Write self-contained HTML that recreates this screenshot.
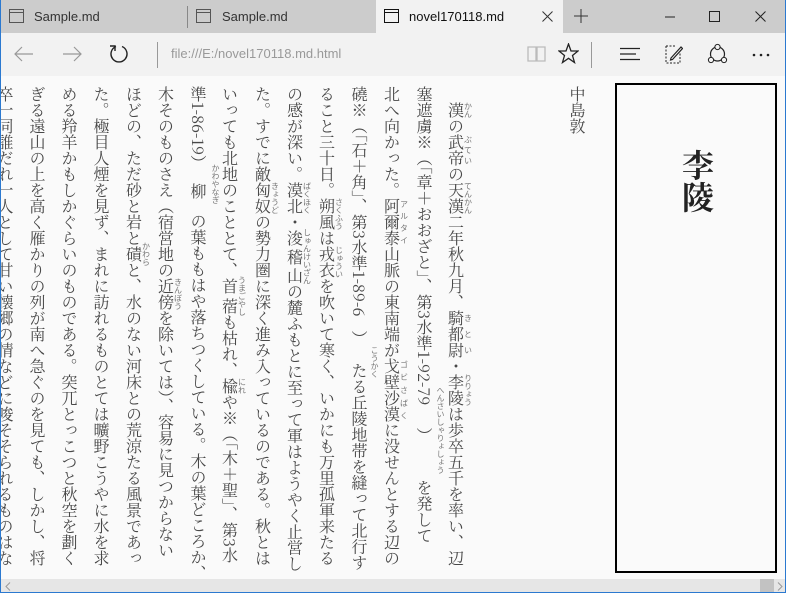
<!DOCTYPE html>
<html lang="ja"><head><meta charset="utf-8">
<style>
*{margin:0;padding:0;box-sizing:border-box}
html,body{width:786px;height:593px;overflow:hidden;background:#fafafa;font-family:"Liberation Sans",sans-serif}
#win{position:absolute;left:0;top:0;width:786px;height:593px;border-left:1px solid #2b79d0;border-right:1px solid #2b79d0;border-bottom:1px solid #2b79d0}
#tabs{position:absolute;left:0;top:0;width:786px;height:33px;background:#cccccc}
.tab{position:absolute;top:0;height:33px;font-size:13px;color:#333;line-height:33px}
#tool{position:absolute;left:0;top:33px;width:786px;height:43px;background:#f2f2f2}
.ab{position:absolute}
#content{position:absolute;left:0;top:76px;width:786px;height:503px;background:#fafafa;overflow:hidden}
.col{position:absolute;top:10px;width:32px;height:490px;writing-mode:vertical-rl;font-size:16px;line-height:32px;white-space:nowrap;color:#484848;font-family:"Noto Serif CJK SC","Noto Serif CJK JP",serif}
rt{font-size:8px;color:#777;font-family:"Noto Sans CJK JP",sans-serif}
.rb{position:absolute;writing-mode:vertical-rl;font-size:8px;color:#777;font-family:"Noto Sans CJK JP",sans-serif;white-space:nowrap;line-height:8px}
.sp{display:inline-block;width:1px}
#box{position:absolute;left:615px;top:7px;width:162px;height:490px;border:2px solid #000}
#ttl{position:absolute;left:65px;top:64px;writing-mode:vertical-rl;font-size:32px;font-weight:bold;line-height:32px;color:#222;font-family:"Noto Serif CJK SC",serif}
#sb{position:absolute;left:0;top:579px;width:786px;height:14px;background:#e6e6e6}
</style></head><body>
<div id="tabs">
 <svg class="ab" style="left:9px;top:9px" width="16" height="15"><rect x="0.5" y="0.5" width="14" height="13" fill="none" stroke="#555"/><line x1="0" y1="3.5" x2="15" y2="3.5" stroke="#555"/></svg>
 <div class="tab" style="left:34px">Sample.md</div>
 <div class="ab" style="left:187px;top:6px;width:1px;height:22px;background:#888"></div>
 <svg class="ab" style="left:196px;top:9px" width="16" height="15"><rect x="0.5" y="0.5" width="14" height="13" fill="none" stroke="#555"/><line x1="0" y1="3.5" x2="15" y2="3.5" stroke="#555"/></svg>
 <div class="tab" style="left:222px">Sample.md</div>
 <div class="ab" style="left:376px;top:0;width:187px;height:33px;background:#f2f2f2"></div>
 <svg class="ab" style="left:384px;top:9px" width="16" height="15"><rect x="0.5" y="0.5" width="14" height="13" fill="none" stroke="#111"/><line x1="0" y1="3.5" x2="15" y2="3.5" stroke="#111"/></svg>
 <div class="tab" style="left:409px;color:#111">novel170118.md</div>
 <svg class="ab" style="left:542px;top:11px" width="11" height="11"><path d="M0.5 0.5L10.5 10.5M10.5 0.5L0.5 10.5" stroke="#333"/></svg>
 <svg class="ab" style="left:574px;top:9px" width="14" height="14"><path d="M7 0V14M0 7H14" stroke="#333"/></svg>
 <svg class="ab" style="left:665px;top:16px" width="10" height="2"><path d="M0 1H10" stroke="#222"/></svg>
 <svg class="ab" style="left:709px;top:11px" width="11" height="11"><rect x="0.5" y="0.5" width="10" height="10" fill="none" stroke="#222"/></svg>
 <svg class="ab" style="left:755px;top:11px" width="11" height="11"><path d="M0.5 0.5L10.5 10.5M10.5 0.5L0.5 10.5" stroke="#222"/></svg>
</div>
<div id="tool">
 <svg class="ab" style="left:14px;top:13px" width="20" height="16"><path d="M19 8H1M8 1L1 8L8 15" fill="none" stroke="#999" stroke-width="1.2"/></svg>
 <svg class="ab" style="left:62px;top:13px" width="20" height="16"><path d="M1 8H19M12 1L19 8L12 15" fill="none" stroke="#999" stroke-width="1.2"/></svg>
 <svg class="ab" style="left:109px;top:11px" width="20" height="20"><path d="M7 2.5A8 8 0 1 0 13 2.5M6 7V2H1" fill="none" stroke="#222" stroke-width="1.4"/></svg>
 <div class="ab" style="left:157px;top:9px;width:1px;height:26px;background:#999"></div>
 <div class="ab" style="left:171px;top:13px;font-size:13px;color:#999">file:///E:/novel170118.md.html</div>
 <svg class="ab" style="left:527px;top:12px" width="20" height="18"><path d="M1 2H9V16H1ZM10 2H18V16H10Z" fill="none" stroke="#bbb" stroke-width="1.3"/></svg>
 <svg class="ab" style="left:558px;top:10px" width="21" height="21"><path d="M10.5 1L13 8H20L14.5 12.5L16.5 19.5L10.5 15.3L4.5 19.5L6.5 12.5L1 8H8Z" fill="none" stroke="#222" stroke-width="1.3"/></svg>
 <div class="ab" style="left:591px;top:9px;width:1px;height:26px;background:#999"></div>
 <svg class="ab" style="left:620px;top:14px" width="20" height="14"><path d="M0 1.5H20M0 7H16M0 12.5H20" stroke="#222" stroke-width="1.3"/></svg>
 <svg class="ab" style="left:664px;top:11px" width="19" height="21"><path d="M2 2H12M2 2V19H16V9" fill="none" stroke="#222" stroke-dasharray="2 1.5"/><path d="M7 14L17 3L18.5 4.5L8.5 15.5L6.5 16Z" fill="none" stroke="#222" stroke-width="1.2"/></svg>
 <svg class="ab" style="left:707px;top:10px" width="21" height="22"><circle cx="10.5" cy="11" r="7" fill="none" stroke="#222" stroke-width="1.2"/><circle cx="10.5" cy="4" r="2.6" fill="#f2f2f2" stroke="#222"/><circle cx="4" cy="17" r="2.6" fill="#f2f2f2" stroke="#222"/><circle cx="17" cy="17" r="2.6" fill="#f2f2f2" stroke="#222"/></svg>
 <svg class="ab" style="left:752px;top:20px" width="18" height="4"><circle cx="2" cy="2" r="1.3" fill="#222"/><circle cx="9" cy="2" r="1.3" fill="#222"/><circle cx="16" cy="2" r="1.3" fill="#222"/></svg>
</div>
<div id="content">
 <div class="col" style="left:561px;top:10px">中島敦</div>
 <div id="box"><div id="ttl">李陵</div></div>

 <div class="col" style="left:440px">　<ruby>漢<rt>かん</rt></ruby>の<ruby>武帝<rt>ぶてい</rt></ruby>の<ruby>天漢<rt>てんかん</rt></ruby>二年秋九月、<ruby>騎都尉<rt>きとい</rt></ruby>・<ruby>李陵<rt>りりょう</rt></ruby>は歩卒五千を率い、辺</div>
 <div class="col" style="left:408px">塞遮虜※（「章＋おおざと」、第3水準1-92-79<i class="sp" style="height:22px"></i>）<i class="sp" style="height:36px"></i>を発して</div>
 <div class="rb" style="left:436px;top:310px">へんさいしゃりょしょう</div>
 <div class="col" style="left:376px">北へ向かった。<ruby>阿爾泰<rt>アルタイ</rt></ruby>山脈の東南端が<ruby>戈壁沙漠<rt>ゴビさばく</rt></ruby>に没せんとする辺の</div>
 <div class="col" style="left:343px">磽※（「石＋角」、第3水準1-89-6<i class="sp" style="height:14px"></i>）<i class="sp" style="height:16px"></i>たる丘陵地帯を縫って北行す</div>
 <div class="rb" style="left:370px;top:270px">こうかく</div>
 <div class="col" style="left:311px">ること三十日。<ruby>朔風<rt>さくふう</rt></ruby>は<ruby>戎衣<rt>じゅうい</rt></ruby>を吹いて寒く、いかにも万里孤軍来たる</div>
 <div class="col" style="left:279px">の感が深い。<ruby>漠北<rt>ばくほく</rt></ruby>・<ruby>浚稽山<rt>しゅんけいざん</rt></ruby>の麓ふもとに至って軍はようやく止営し</div>
 <div class="col" style="left:247px">た。すでに敵<ruby>匈奴<rt>きょうど</rt></ruby>の勢力圏に深く進み入っているのである。秋とは</div>
 <div class="col" style="left:214px">いっても北地のこととて、<ruby>首蓿<rt>うまごやし</rt></ruby>も枯れ、<ruby>楡<rt>にれ</rt></ruby>や※（「木＋聖」、第3水</div>
 <div class="col" style="left:182px">準1-86-19）<i class="sp" style="height:12px"></i>柳<i class="sp" style="height:14px"></i>の葉ももはや落ちつくしている。木の葉どころか、</div>
 <div class="rb" style="left:211px;top:88px">かわやなぎ</div>
 <div class="col" style="left:150px">木そのものさえ（宿営地の<ruby>近傍<rt>きんぼう</rt></ruby>を除いては）、容易に見つからない</div>
 <div class="col" style="left:118px">ほどの、ただ砂と岩と<ruby>磧<rt>かわら</rt></ruby>と、水のない河床との荒涼たる風景であっ</div>
 <div class="col" style="left:85px">た。極目人煙を見ず、まれに訪れるものとては曠野こうやに水を求</div>
 <div class="col" style="left:53px">める羚羊かもしかぐらいのものである。突兀とっこつと秋空を劃く</div>
 <div class="col" style="left:21px">ぎる遠山の上を高く雁かりの列が南へ急ぐのを見ても、しかし、将</div>
 <div class="col" style="left:-11px">卒一同誰だれ一人として甘い懐郷の情などに唆そそられるものはな</div>
</div>
<div id="sb">
 <svg class="ab" style="left:5px;top:3px" width="6" height="9"><path d="M5 0.5L1 4.5L5 8.5" fill="none" stroke="#999"/></svg>
 <div class="ab" style="left:760px;top:0;width:14px;height:14px;background:#c2c2c2"></div>
 <svg class="ab" style="left:777px;top:3px" width="6" height="9"><path d="M1 0.5L5 4.5L1 8.5" fill="none" stroke="#999"/></svg>
</div>
<div id="win"></div>
</body></html>
